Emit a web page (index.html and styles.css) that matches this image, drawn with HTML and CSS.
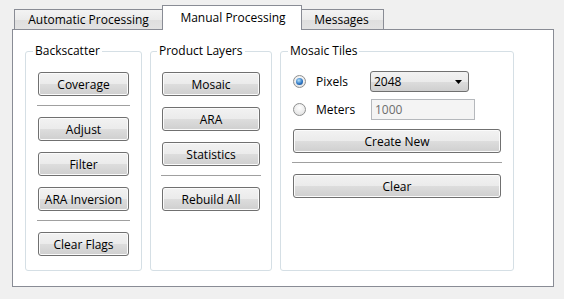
FILE: index.html
```html
<!DOCTYPE html>
<html lang="en">
<head>
  <meta charset="UTF-8">
  <title>Manual Processing</title>
  <link rel="stylesheet" href="styles.css">
</head>
<body>
  <div class="window">
    <div class="tabs">
      <div class="tab tab-auto">Automatic Processing</div>
      <div class="tab tab-manual active">Manual Processing</div>
      <div class="tab tab-messages">Messages</div>
    </div>

    <div class="pane">
      <fieldset class="group group-backscatter">
        <legend>Backscatter</legend>
        <button>Coverage</button>
        <hr class="sep">
        <button>Adjust</button>
        <button>Filter</button>
        <button>ARA Inversion</button>
        <hr class="sep">
        <button>Clear Flags</button>
      </fieldset>

      <fieldset class="group group-layers">
        <legend>Product Layers</legend>
        <button>Mosaic</button>
        <button>ARA</button>
        <button>Statistics</button>
        <hr class="sep">
        <button>Rebuild All</button>
      </fieldset>

      <fieldset class="group group-tiles">
        <legend>Mosaic Tiles</legend>
        <div class="tile-row">
          <span class="radio checked"><span class="dot"></span></span>
          <span class="radio-label">Pixels</span>
          <div class="combo">
            <span>2048</span>
            <svg width="7" height="4" viewBox="0 0 7 4"><polygon points="0,0 7,0 3.5,4" fill="#000"/></svg>
          </div>
        </div>
        <div class="tile-row">
          <span class="radio"></span>
          <span class="radio-label">Meters</span>
          <input class="field" type="text" value="1000" disabled>
        </div>
        <button>Create New</button>
        <hr class="sep">
        <button>Clear</button>
      </fieldset>
    </div>
  </div>
</body>
</html>
```

FILE: styles.css
```css
* {
  box-sizing: border-box;
}

body {
  margin: 0;
  background-color: #f0f0f0;
  font-family: "Open Sans", sans-serif;
  font-size: 12px;
  color: #000;
}

.window {
  padding: 5px 0 0 12px;
}

/* Tab strip */
.tabs {
  display: flex;
  align-items: flex-end;
  margin-left: 2px;
  position: relative;
  z-index: 1;
}

.tab {
  height: 21px;
  line-height: 19px;
  text-align: center;
  border: 1px solid #898c95;
  background: linear-gradient(#f3f3f3, #ebebeb 50%, #dedede 51%, #e3e3e3);
  white-space: nowrap;
}

.tab-auto {
  width: 149px;
}

.tab-manual {
  width: 140px;
  margin-left: -1px;
  padding-left: 2px;
}

.tab-messages {
  width: 83px;
  margin-left: -1px;
  padding-right: 2px;
}

.tab.active {
  position: relative;
  z-index: 2;
  height: 25px;
  padding-top: 2px;
  border-bottom: none;
  background: #fff;
}

/* Tab page */
.pane {
  display: flex;
  gap: 8px;
  width: 542px;
  height: 258px;
  margin-top: -1px;
  padding: 13px 12px 15px;
  background-color: #fff;
  border: 1px solid #898c95;
}

.group {
  margin: 0;
  min-width: 0;
  padding: 13px 12px 0;
  border: 1px solid #d5dfe5;
  border-radius: 3px;
}

.group legend {
  margin-left: -5px;
  padding: 0 2px;
  line-height: 16px;
}

.group-backscatter {
  width: 117px;
}

.group-layers {
  width: 122px;
  padding-left: 11px;
  padding-right: 11px;
}

.group-tiles {
  width: 234px;
  padding-top: 12px;
}

button {
  display: block;
  width: 100%;
  height: 24px;
  margin: 0 0 11px;
  padding: 0;
  font-family: inherit;
  font-size: 12px;
  color: #000;
  border: 1px solid #707070;
  border-radius: 3px;
  background: linear-gradient(#f2f2f2, #ebebeb 50%, #dddddd 51%, #cfcfcf);
  box-shadow: inset 0 0 0 1px #fbfbfb;
}

.sep {
  height: 0;
  margin: -2px -1px 11px;
  border: 0;
  border-top: 1px solid #a0a0a0;
}

/* Mosaic tiles rows */
.tile-row {
  display: flex;
  align-items: center;
  height: 21px;
  margin-bottom: 7px;
}

.tile-row + .tile-row {
  margin-bottom: 9px;
}

.radio {
  display: flex;
  align-items: center;
  justify-content: center;
  flex: none;
  width: 13px;
  height: 13px;
  margin-right: 10px;
  border: 1px solid #8e8f8f;
  border-radius: 50%;
  background: radial-gradient(circle at 50% 35%, #ffffff, #dcdcdc);
}

.radio .dot {
  width: 7px;
  height: 7px;
  border-radius: 50%;
  background: radial-gradient(circle at 40% 35%, #b5e1f8, #2f78c6 55%, #123d7a);
}

.radio-label {
  width: 54px;
}

.combo {
  display: flex;
  align-items: center;
  justify-content: space-between;
  width: 99px;
  height: 21px;
  padding: 0 6px 0 3px;
  border: 1px solid #707070;
  border-radius: 3px;
  background: linear-gradient(#f2f2f2, #ebebeb 50%, #dddddd 51%, #cfcfcf);
}

.field {
  width: 104px;
  height: 21px;
  margin: 0 0 0 1px;
  padding: 0 3px;
  font-family: inherit;
  font-size: 12px;
  color: #6d6d6d;
  background-color: #f4f4f4;
  border: 1px solid #b5b8bc;
}
```
